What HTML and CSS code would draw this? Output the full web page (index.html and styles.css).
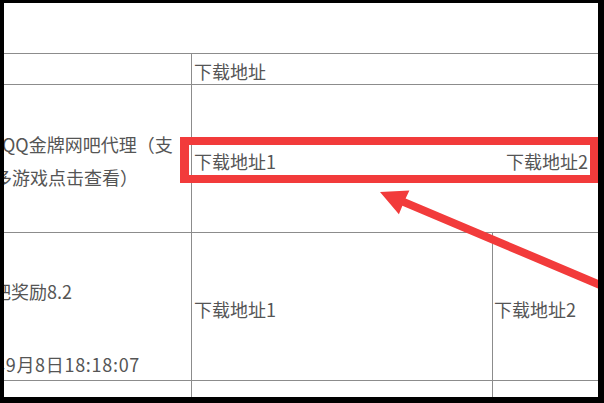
FILE: index.html
```html
<!DOCTYPE html>
<html lang="zh-CN">
<head>
<meta charset="utf-8">
<title>下载地址</title>
<link rel="stylesheet" href="styles.css">
</head>
<body>
<div class="frame">
  <div class="top-space"></div>
  <div class="sheet">
    <div class="cell"></div>
    <div class="cell span head">下载地址</div>

    <div class="cell name two">
      <div class="ln ln-a">QQ金牌网吧代理（支</div>
      <div class="ln ln-b">多游戏点击查看）</div>
    </div>
    <div class="cell span links">
      <span>下载地址1</span>
      <span>下载地址2</span>
    </div>

    <div class="cell name spread">
      <div class="ln ln-c">吧奖励8.2</div>
      <div class="ln ln-d">年9月8日18:18:07</div>
    </div>
    <div class="cell mid">下载地址1</div>
    <div class="cell mid last">下载地址2</div>

    <div class="cell"></div>
    <div class="cell"></div>
    <div class="cell"></div>
  </div>

  <div class="highlight"></div>
  <svg class="arrow" width="604" height="403" viewBox="0 0 604 403">
    <polygon fill="#f23b3b" points="380,192 409.4,190.4 405.6,198.4 639.4,297.2 636.3,304.6 402.4,205.8 398.9,214.2"/>
  </svg>
</div>
</body>
</html>
```
FILE: styles.css
```css
html, body {
  margin: 0;
  padding: 0;
  background: #fff;
}

.frame {
  box-sizing: border-box;
  width: 604px;
  height: 403px;
  border-style: solid;
  border-color: #000;
  border-width: 3px 6px 6px 4px;
  position: relative;
  overflow: hidden;
  background: #fff;
  font-family: "Noto Sans CJK SC", "Noto Sans", sans-serif;
  font-size: 18px;
  color: #555;
}

.top-space {
  height: 50px;
}

.sheet {
  display: grid;
  grid-template-columns: 187px 301px 1fr;
  grid-template-rows: 31px 148px 148px 40px;
}

.cell {
  border-top: 1px solid #8c8c8c;
  min-width: 0;
  overflow: hidden;
  white-space: nowrap;
}

.cell + .cell {
  border-left: 1px solid #8c8c8c;
}

.sheet > .cell:nth-child(3),
.sheet > .cell:nth-child(5),
.sheet > .cell:nth-child(8) {
  border-left: none;
}

.span {
  grid-column: span 2;
}

.head {
  display: flex;
  align-items: center;
  padding: 4px 0 0 2px;
  line-height: 24px;
}

.name {
  display: flex;
  flex-direction: column;
}

.two {
  justify-content: center;
  padding-top: 5px;
  line-height: 33px;
}

.spread {
  justify-content: space-between;
  padding: 46px 0 4px;
  line-height: 24px;
}

.ln-a { margin-left: -2px; }
.ln-b { margin-left: -10px; }
.ln-c { margin-left: -11px; }
.ln-d { margin-left: -17px; letter-spacing: 0.7px; }

.links {
  display: flex;
  justify-content: space-between;
  align-items: center;
  padding: 5px 10px 0 2px;
}

.mid {
  display: flex;
  align-items: center;
  padding: 5px 0 0 2px;
}

.last {
  padding-left: 1px;
}

.highlight {
  position: absolute;
  left: 176px;
  top: 134px;
  width: 418px;
  height: 46px;
  box-sizing: border-box;
  border: 8px solid #f23b3b;
  border-left-width: 9px;
}

.arrow {
  position: absolute;
  left: -4px;
  top: -3px;
}
```
